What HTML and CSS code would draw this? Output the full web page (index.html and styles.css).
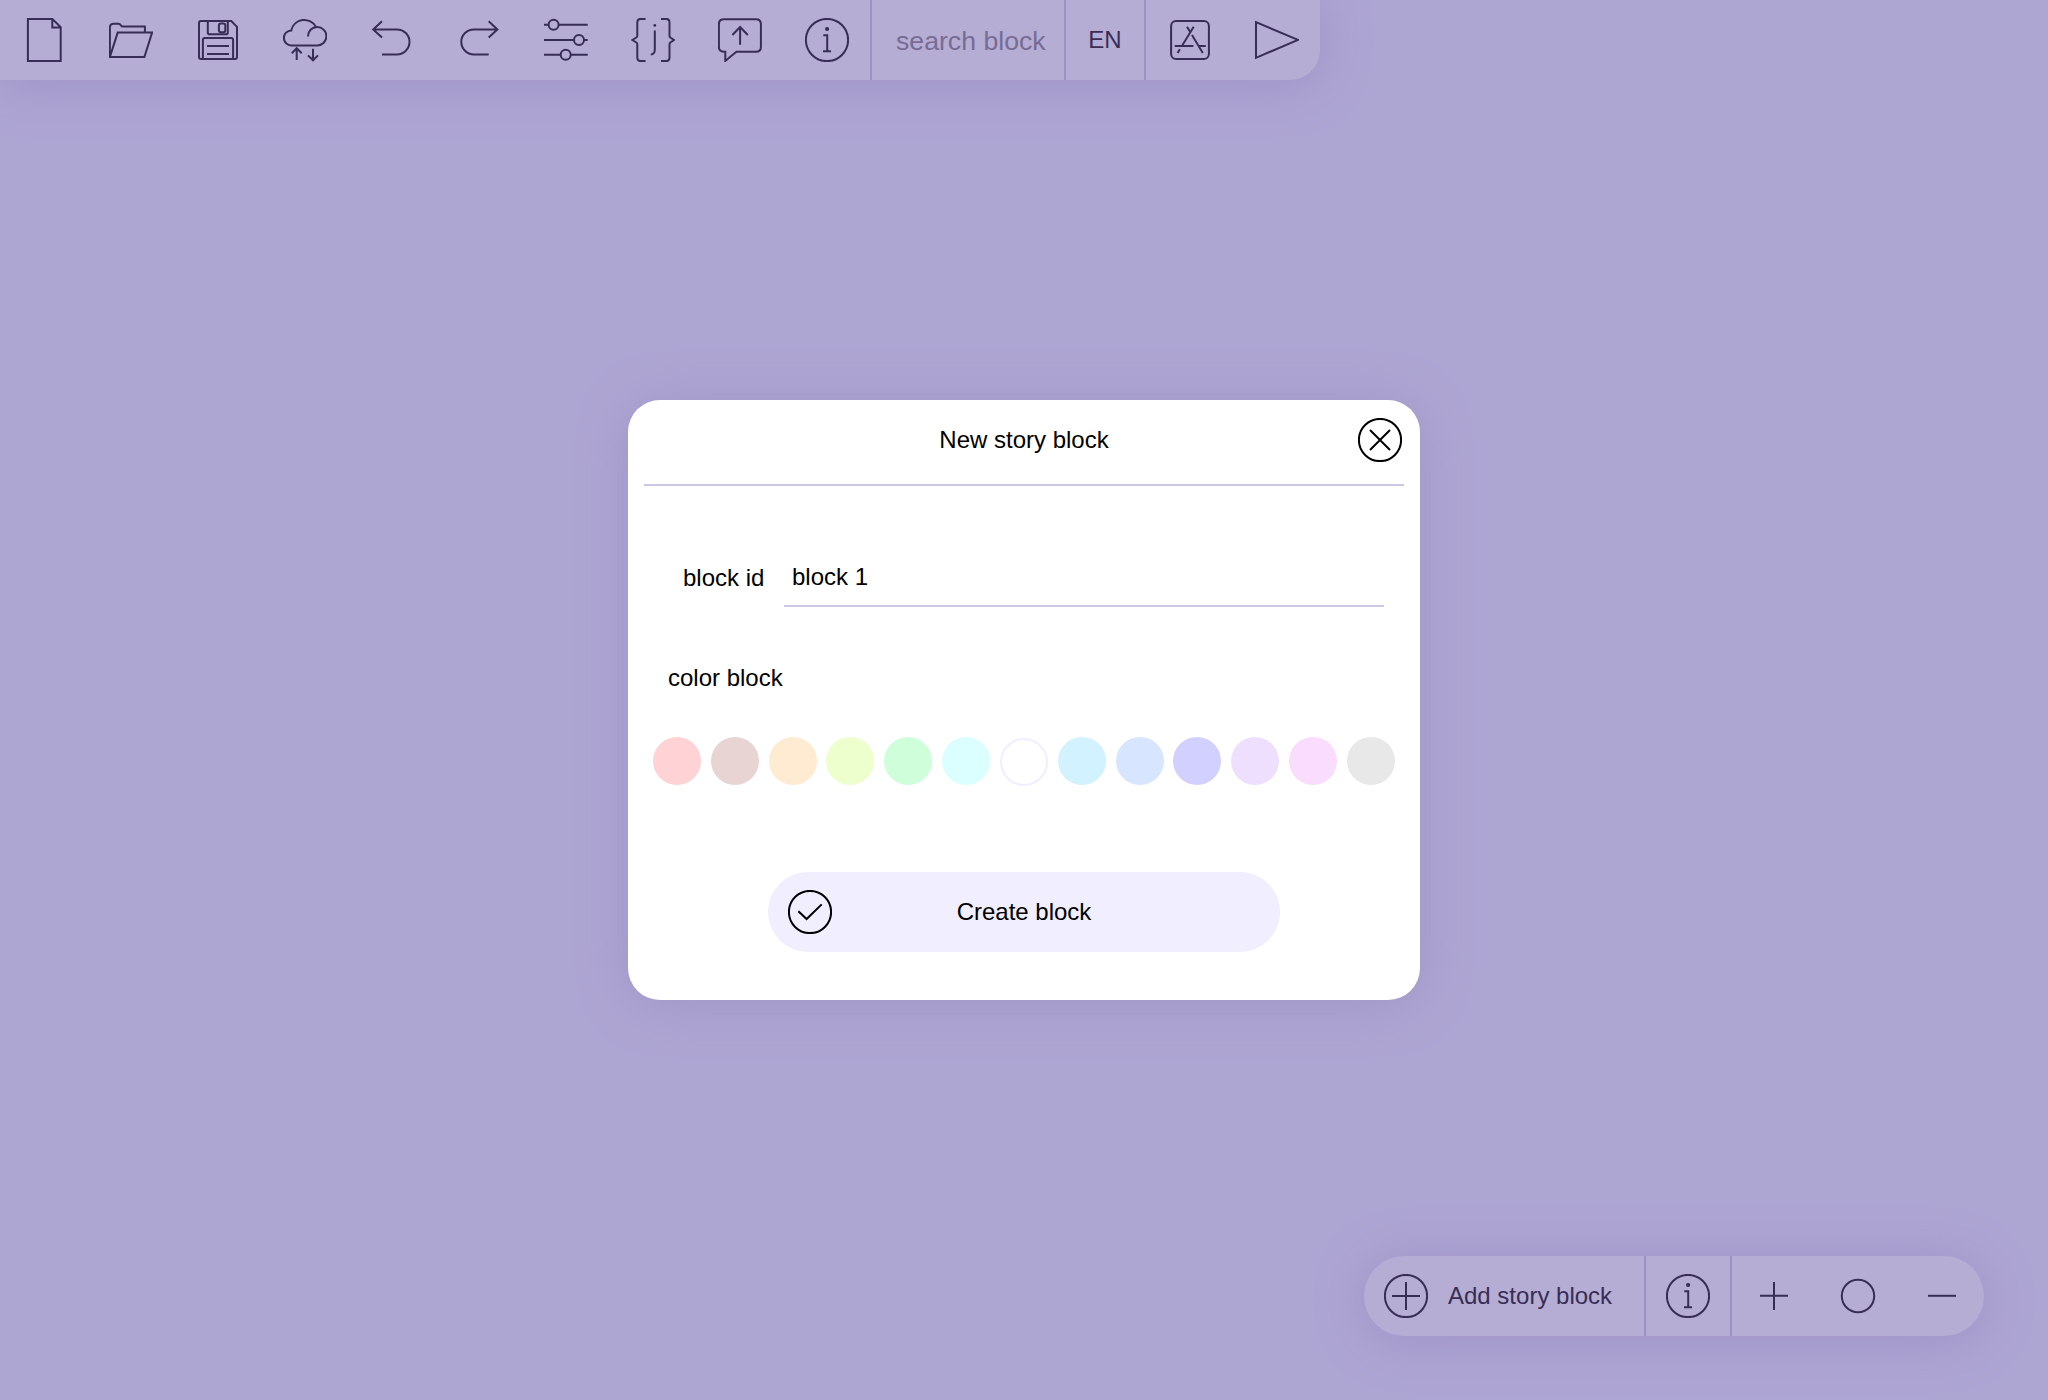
FILE: index.html
```html
<!DOCTYPE html>
<html lang="en">
<head>
<meta charset="utf-8">
<title>Story editor</title>
<link rel="stylesheet" href="styles.css">
</head>
<body>
<svg class="sprite" width="0" height="0">
  <symbol id="info" viewBox="0 0 44 44"><circle cx="22" cy="22" r="21.1"/><circle class="dot" cx="22.1" cy="11" r="2.1"/><path d="M18.3 17.2H22.2V33.2M18 33.2H26"/></symbol>
</svg>
<div class="app">
  <header class="toolbar">
    <div class="tools">
      <svg class="icon" viewBox="0 0 44 44"><path d="M5.9 .9H30.3L38.7 9.2V43.1H5.9ZM30.3 .9V9.4H38.7"/></svg>
      <svg class="icon" viewBox="0 0 44 44"><path d="M.9 38.8V9.6Q.9 5.8 4.6 5.8H9.4Q11 5.8 11.8 7.2Q12.6 8.6 14 8.6H35.9V14.4M8.7 14.6H43.1L35.4 39H.9Z"/></svg>
      <svg class="icon" viewBox="0 0 44 44"><path d="M5 3H35.3L41 8.9V39Q41 41 39 41H5Q3 41 3 39V5Q3 3 5 3ZM11.8 3V14.4Q11.8 16.2 13.6 16.2H30Q31.8 16.2 31.8 14.4V3M6.9 41V22Q6.9 20.1 8.8 20.1H35.2Q37.1 20.1 37.1 22V41M11 28H33M11 36H33"/><rect x="22.9" y="5.5" width="6.4" height="8.7" rx="2"/></svg>
      <svg class="icon" viewBox="0 0 44 44"><path d="M34.2 27.4A9.2 9.2 0 1 0 25 18.4M33 9A13.3 13.3 0 0 0 8.3 12.4A7.5 7.5 0 0 0 8.4 27.4H34.2M13.7 42V30.2M8.8 35.2L13.7 30.2L18.7 35.2M30 30.7V42.3M25 37.4L30 42.3L35 37.4"/></svg>
      <svg class="icon" viewBox="0 0 44 44"><path d="M3.2 11.4H27A12.5 12.5 0 0 1 27 36.4H12M12 3.3L3.2 11.4L12 19.6"/></svg>
      <svg class="icon" viewBox="0 0 44 44"><path d="M40.4 11.4H16.8A12.5 12.5 0 0 0 16.8 36.4H31.7M31.7 3.3L40.4 11.4L31.7 19.6"/></svg>
      <svg class="icon" viewBox="0 0 44 44"><path d="M0 6.8H4.6M14.6 6.8H43.7M0 21.9H30M40 21.9H43.7M0 36.8H16.7M26.7 36.8H43.7"/><circle cx="9.6" cy="6.8" r="5"/><circle cx="35" cy="21.9" r="5"/><circle cx="21.7" cy="36.8" r="5"/></svg>
      <svg class="icon" viewBox="0 0 44 44"><path d="M14.6 .9H9.8Q6.3 .9 6.3 4.4V17.8Q6.3 18.9 5.4 19.5L1.4 22L5.4 24.5Q6.3 25.1 6.3 26.2V39.6Q6.3 43.1 9.8 43.1H14.6M30 .9H35Q38.5 .9 38.5 4.4V17.8Q38.5 18.9 39.3 19.5L43 22L39.3 24.5Q38.5 25.1 38.5 26.2V39.6Q38.5 43.1 35 43.1H30M23.8 12.4V31.5Q23.8 36.3 19.8 36.4"/><circle class="dot" cx="23.8" cy="7.4" r="1.4"/></svg>
      <svg class="icon" viewBox="0 0 44 44"><path d="M6 1.2H38Q42.9 1.2 42.9 6V29Q42.9 33.8 38 33.8H18.4L7.3 42.9V33.8H6.2Q.9 33.8 .9 29V6Q.9 1.2 6 1.2ZM22.1 26.7V9M14.4 17L22.1 9L29.8 17"/></svg>
      <svg class="icon"><use href="#info"/></svg>
    </div>
    <div class="search">search block</div>
    <div class="lang">EN</div>
    <div class="launch">
      <svg class="icon" viewBox="0 0 44 44"><rect x="3.1" y="3.1" width="37.8" height="37.8" rx="5"/><path d="M25.7 8.8L14.2 27.5M19 8.8L22.2 14M24 17L34.8 35M6.7 28H25.4M30.6 28H37.8M11.9 31.2L9.6 35"/></svg>
      <svg class="icon" viewBox="0 0 44 44"><path d="M1 4.2L43 21.8L1 39.8Z"/></svg>
    </div>
  </header>

  <main class="dialog">
    <div class="dialog-head">
      <h1>New story block</h1>
      <svg class="icon" viewBox="0 0 44 44"><circle cx="22" cy="22" r="21.1"/><path d="M12 12L32 32M32 12L12 32"/></svg>
    </div>
    <div class="field">
      <label>block id</label>
      <div class="input">block 1</div>
    </div>
    <h2>color block</h2>
    <div class="swatches">
      <i class="c1"></i><i class="c2"></i><i class="c3"></i><i class="c4"></i><i class="c5"></i><i class="c6"></i><i class="c7"></i><i class="c8"></i><i class="c9"></i><i class="c10"></i><i class="c11"></i><i class="c12"></i><i class="c13"></i>
    </div>
    <div class="create">
      <svg class="icon" viewBox="0 0 44 44"><circle cx="22" cy="22" r="21.1"/><path d="M10.4 21.2L18.6 29L33.7 14.4"/></svg>
      <span>Create block</span>
    </div>
  </main>

  <footer class="dock">
    <div class="add">
      <svg class="icon" viewBox="0 0 44 44"><circle cx="22" cy="22" r="21.1"/><path d="M8 22H36M22 8V36"/></svg>
      <span>Add story block</span>
    </div>
    <div class="help"><svg class="icon"><use href="#info"/></svg></div>
    <div class="zoom">
      <svg class="icon" viewBox="0 0 44 44"><path d="M8 21.8H36M22 8V36"/></svg>
      <svg class="icon" viewBox="0 0 44 44"><circle cx="22" cy="22" r="16.2"/></svg>
      <svg class="icon" viewBox="0 0 44 44"><path d="M8 21.8H36"/></svg>
    </div>
  </footer>
</div>
</body>
</html>
```
FILE: styles.css
```css
* { box-sizing: border-box; }

body {
  margin: 0;
  background: #ada5d2;
  font: 24px/28px "Liberation Sans", Arial, sans-serif;
  color: #000;
}

.sprite { display: block; }

.app {
  width: 2048px;
  height: 1400px;
  display: flex;
  flex-direction: column;
  overflow: hidden;
}

.icon {
  display: block;
  width: 44px;
  height: 44px;
  flex: none;
  fill: none;
  stroke: currentColor;
  stroke-width: 2;
}

.dot { fill: currentColor; stroke: none; }

.toolbar,
.dock {
  display: flex;
  height: 80px;
  background: #b5add3;
  color: #382d56;
  box-shadow: 0 4px 50px #9d92c8;
}

.toolbar {
  width: 1320px;
  border-bottom-right-radius: 30px;
}

.tools {
  display: flex;
  align-items: center;
  gap: 43px;
  width: 870px;
  padding-left: 22px;
}

.search,
.lang,
.launch,
.help,
.zoom { border-left: 2px solid #9c93c6; }

.search {
  width: 194px;
  padding: 26px 0 0 24px;
  font-size: 26.67px;
  line-height: 30px;
  color: #766c95;
}

.lang {
  width: 80px;
  padding-top: 26px;
  text-align: center;
}

.launch {
  display: flex;
  align-items: center;
  gap: 43px;
  padding-left: 22px;
}

.dialog {
  width: 792px;
  height: 600px;
  margin: 320px auto 0;
  padding: 0 16px;
  border-radius: 32px;
  background: #fff;
  box-shadow: 0 4px 50px #a095c7;
}

h1, h2 { margin: 0; font-size: 24px; font-weight: 400; }

.dialog-head {
  display: grid;
  grid-template-columns: 44px 1fr 44px;
  align-items: center;
  height: 86px;
  padding: 0 2px 4px 0;
  border-bottom: 2px solid #ccc8e3;
}

.dialog-head h1 { grid-column: 2; padding-left: 2px; text-align: center; }

.field {
  display: flex;
  height: 121px;
  padding: 62px 20px 0 39px;
  justify-content: space-between;
}

.field label { padding-top: 16px; }

.input {
  width: 600px;
  height: 59px;
  padding: 15px 8px 0;
  border-bottom: 2px solid #ccc8e3;
}

h2 { margin: 57px 0 0 24px; }

.swatches {
  display: flex;
  justify-content: space-between;
  width: 742px;
  margin: 45px 0 0 9px;
}

.swatches i { width: 48px; height: 48px; border-radius: 50%; }

.c1 { background: #ffd3d5; }
.c2 { background: #e9d4d4; }
.c3 { background: #ffebd1; }
.c4 { background: #edffcc; }
.c5 { background: #cfffda; }
.c6 { background: #dbffff; }
.swatches .c7 { margin-top: 1px; border: 2px solid #f0eeff; }
.c8 { background: #d2f2ff; }
.c9 { background: #d8e5ff; }
.c10 { background: #d2d0ff; }
.c11 { background: #eedfff; }
.c12 { background: #fadcff; }
.c13 { background: #e8e8e8; }

.create {
  display: grid;
  grid-template-columns: 44px 1fr 44px;
  align-items: center;
  width: 512px;
  height: 80px;
  margin: 86px auto 0;
  padding: 0 20px;
  border-radius: 40px;
  background: #f0eeff;
  text-align: center;
}

.dock {
  width: 620px;
  margin: 256px 64px 0 auto;
  border-radius: 40px;
}

.add,
.help,
.zoom { display: flex; align-items: center; }

.add { width: 280px; padding-left: 20px; gap: 20px; }
.help { width: 86px; padding-left: 20px; }
.zoom { padding-left: 20px; gap: 40px; }
```
